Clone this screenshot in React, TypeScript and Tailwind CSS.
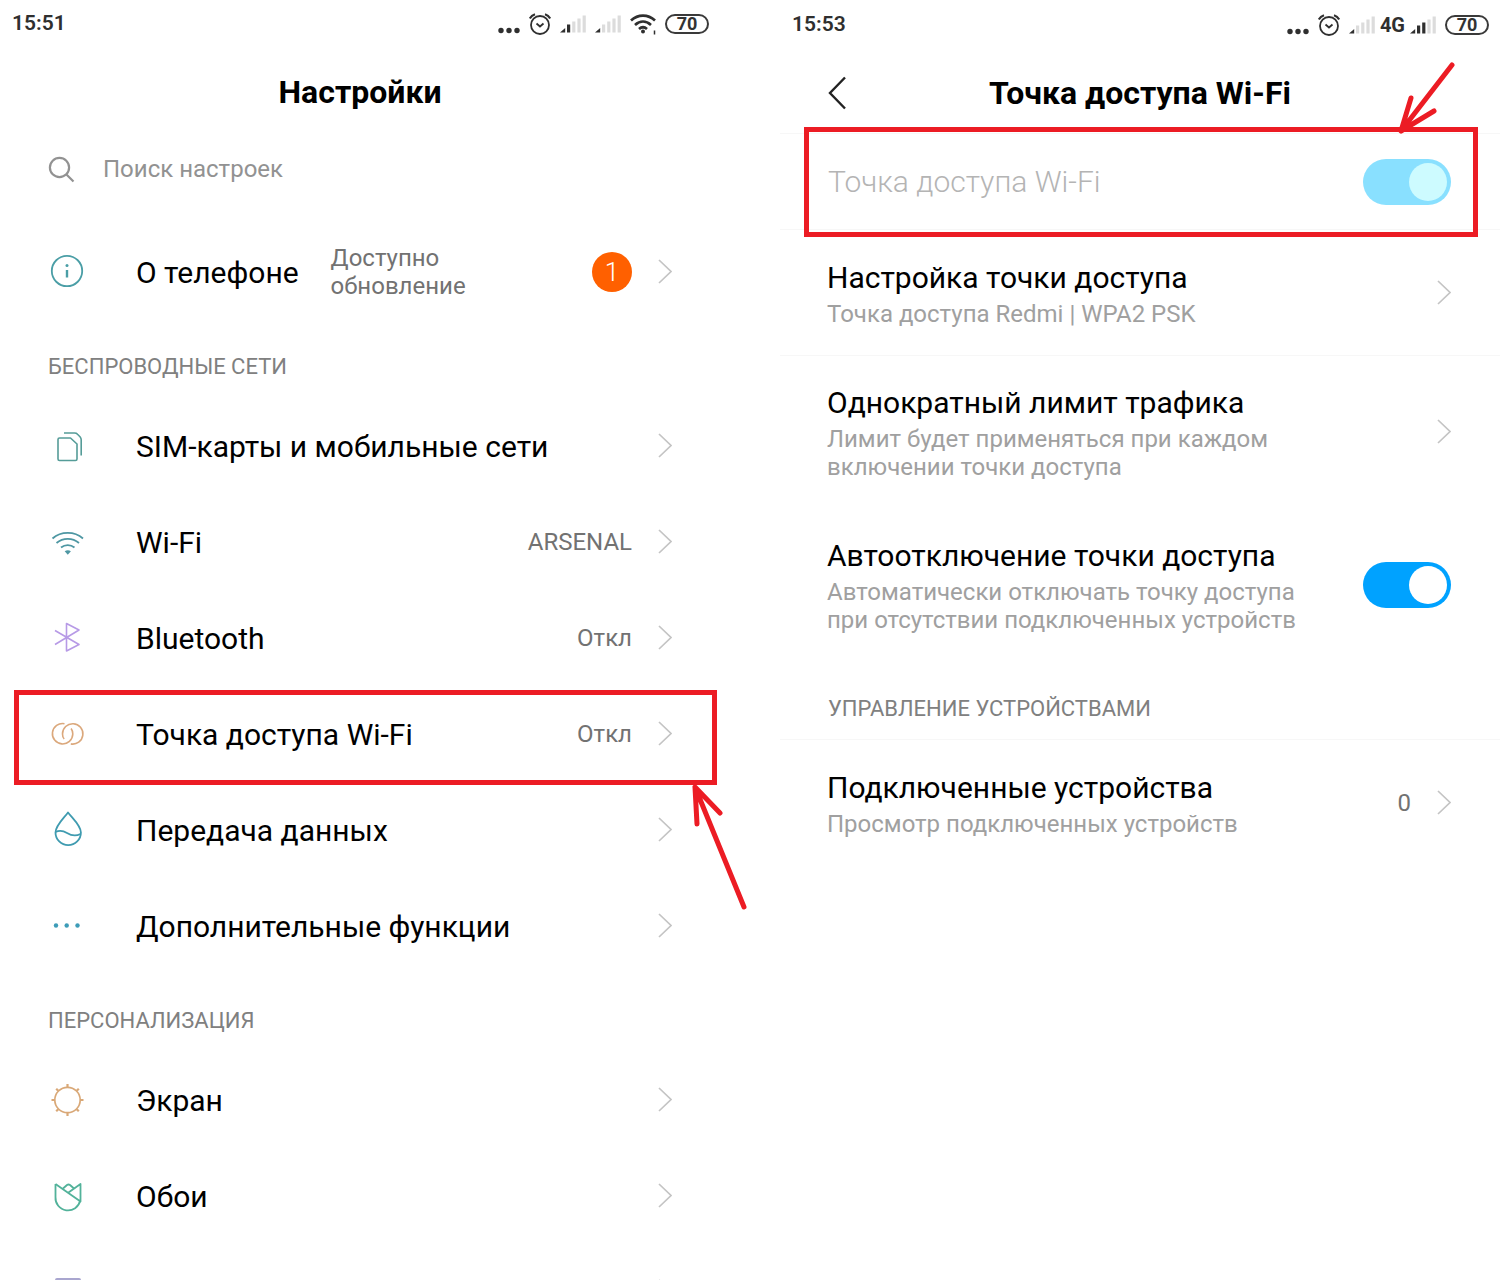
import type { ReactNode } from 'react';

type IconProps = { className?: string };

function InfoIcon() {
  return (
    <svg viewBox="0 0 38 38" className="size-[38px]" fill="none" stroke="#4a9ea6" strokeWidth="1.8">
      <circle cx="19" cy="18" r="15.2" />
      <path d="M19 17v7.5" strokeWidth="2.4" />
      <circle cx="19" cy="12.6" r="1.5" fill="#4a9ea6" stroke="none" />
    </svg>
  );
}

function SimIcon() {
  return (
    <svg viewBox="0 0 38 38" className="size-[38px]" fill="none" stroke="#559c98" strokeWidth="1.6" strokeLinejoin="round">
      <path d="M11.5 11h11l6.500 6V32q0 1.500-1.500 1.500h-16Q10 33.500 10 32V12.500Q10 11 11.500 11z" />
      <path d="M16 6h10.500q2 0 3 1.200l2.500 2.500q1.200 1.300 1.200 3V28.500" />
    </svg>
  );
}

function WifiIcon() {
  return (
    <svg viewBox="-1 0 38 38" className="size-[38px]" fill="none" stroke="#4e97a3" strokeWidth="1.8">
      <path d="M3.500 15.500c8.500-7.500 22-7.500 30.500 0" />
      <path d="M7.500 20c6.500-5.500 16-5.500 22.500 0" />
      <path d="M12 24.500c4-3.300 9.500-3.300 13.500 0" />
      <path d="M15.700 28.300q3.100-2 6.200 0l-3.100 3.400z" fill="#4e97a3" stroke="none" />
    </svg>
  );
}

function BluetoothIcon() {
  return (
    <svg viewBox="-1 0 38 38" className="size-[38px]" fill="none" stroke="#b79ae6" strokeWidth="1.6" strokeLinejoin="round">
      <path d="M6 11.500l24 14L17.500 32V4.500L30 11 6 25.500" />
    </svg>
  );
}

function HotspotIcon() {
  return (
    <svg viewBox="-1 0 38 38" className="size-[38px]" fill="none" stroke="#dba87c" strokeWidth="1.600">
      <path d="M15.500 8.700A10.200 10.200 0 1 0 23.800 19c0-2-.6-4-1.700-5.500" />
      <path d="M21.800 28.900A10.200 10.200 0 1 0 13.500 19c0 2 .6 4 1.700 5" />
    </svg>
  );
}

function DropIcon() {
  return (
    <svg viewBox="-1 0 38 38" className="size-[38px]" fill="none" stroke="#3f9bb0" strokeWidth="1.8" strokeLinejoin="round">
      <path d="M19 1.500C14.500 7.500 6.500 14.500 6.500 21.500a12.700 12.700 0 0 0 25.400 0C31.900 14.500 23.500 7.500 19 1.500z" />
      <path d="M6.500 21c4-2 7.500-1.500 11.500 1s9.500 3 13.500 1" />
    </svg>
  );
}

function DotsIcon() {
  return (
    <svg viewBox="0 0 38 38" className="size-[38px]" fill="#3d9cb8">
      <circle cx="8" cy="18.500" r="2.200" />
      <circle cx="18.700" cy="18.500" r="2.200" />
      <circle cx="29.500" cy="18.500" r="2.200" />
    </svg>
  );
}

function SunIcon() {
  return (
    <svg viewBox="0 0 38 38" className="size-[38px]" fill="none" stroke="#d9a877" strokeWidth="1.7">
      <circle cx="19.500" cy="19" r="12.700" />
      <path
        d="M19.500 6V3M19.500 32v3M6.500 19h-3M32.500 19h3M10.300 9.800L8.200 7.700M28.700 9.800l2.100-2.100M10.300 28.200l-2.100 2.100M28.700 28.200l2.100 2.100"
        strokeWidth="2.200"
      />
    </svg>
  );
}

function TulipIcon() {
  return (
    <svg viewBox="-1 0 38 38" className="size-[38px]" fill="none" stroke="#52b29a" strokeWidth="1.800" strokeLinejoin="round">
      <path d="M6.500 7L31.500 24.500V7L19.500 15.500" />
      <path d="M6.500 7V20a12.500 12.500 0 0 0 24.700 3.500" />
      <path d="M14 11.500l4-3.500q1.500-1 3 0l4 3.500" />
    </svg>
  );
}

function LockScreenIcon() {
  return (
    <svg viewBox="-1 0 38 38" className="size-[38px]" fill="none" stroke="#a9a6cf" strokeWidth="2">
      <rect x="7" y="6" width="24" height="28" rx="1" />
    </svg>
  );
}

function Chevron() {
  return (
    <svg viewBox="0 0 14 26" className="h-[26px] w-[14px] shrink-0" fill="none" stroke="#c4c4c4" strokeWidth="1.700">
      <path d="M1 1l12 11.500L1 24" />
    </svg>
  );
}

function MoreDots() {
  return (
    <svg viewBox="0 0 22 24" className="h-6 w-[22px]" fill="#2f2f2f">
      <circle cx="3" cy="18.500" r="2.700" />
      <circle cx="11" cy="18.500" r="2.700" />
      <circle cx="19" cy="18.500" r="2.700" />
    </svg>
  );
}

function AlarmIcon() {
  return (
    <svg viewBox="0 0 22 24" className="h-6 w-[22px]" fill="none" stroke="#2f2f2f" strokeWidth="1.800">
      <circle cx="11" cy="13" r="9" />
      <path d="M7.500 11.500l3.500 3 3.500-3" />
      <path d="M.800 6.500Q2.500 3.500 6 2.300M21.200 6.500Q19.500 3.500 16 2.300" strokeWidth="2.200" />
    </svg>
  );
}

function SignalIcon({ level }: { level: number }) {
  const bars = [4, 8, 11, 14, 17];
  return (
    <svg viewBox="0 0 26 24" className="h-6 w-[26px]">
      {bars.map((h, i) =>
        i === 0 ? (
          <path key={i} d="M0 20.500l5.200-4.500v4.500z" fill="#2f2f2f" />
        ) : (
          <rect key={i} x={1.8 + i * 5.200} y={20.5 - h} width="3.200" height={h} fill={i < level ? '#2f2f2f' : '#dcdcdc'} />
        ),
      )}
    </svg>
  );
}

function StatusWifi() {
  return (
    <svg viewBox="0 0 26 24" className="h-6 w-[26px]" fill="none" stroke="#2f2f2f" strokeWidth="2.700">
      <path d="M1 8.500c7-6.500 17-6.500 24 0" />
      <path d="M5 13c5-4.500 11-4.500 16 0" />
      <path d="M9 17c2.500-2.200 5.500-2.200 8 0" />
      <circle cx="13" cy="19.500" r="2" fill="#2f2f2f" stroke="none" />
      <path d="M24.500 18.500v4" strokeWidth="1.500" />
    </svg>
  );
}

function Battery() {
  return (
    <span className="flex h-5 w-11 items-center justify-center rounded-full border-2 border-[#3a3a3a] text-[18px] leading-none font-bold text-[#333]">
      70
    </span>
  );
}

function StatusBar({ time, children }: { time: string; children: ReactNode }) {
  return (
    <div className="flex h-12 items-center justify-between pr-[11px] pl-3 text-[#2f2f2f]">
      <span className="text-[21px] font-semibold">{time}</span>
      <div className="flex items-center gap-[9px]">{children}</div>
    </div>
  );
}

function Arrow({ className, d }: IconProps & { d: string }) {
  return (
    <svg className={className} fill="none" stroke="#ec1c24" strokeWidth="5" strokeLinecap="round" strokeLinejoin="round">
      <path d={d} />
    </svg>
  );
}

type SettingsRowProps = {
  icon: ReactNode;
  label?: string;
  note?: string;
  value?: string;
  badge?: number;
  children?: ReactNode;
};

function SettingsRow({ icon, label, note, value, badge, children }: SettingsRowProps) {
  return (
    <li className="relative">
      <a href="#" className="flex h-24 items-center pr-12 pl-12">
        <span className="mr-[50px] shrink-0">{icon}</span>
        <span className="text-[30px] whitespace-nowrap text-black">{label}</span>
        {note && <span className="ml-8 w-40 text-2xl leading-7 text-[#727272]">{note}</span>}
        <span className="ml-auto flex items-center gap-[26px]">
          {value && <span className="text-2xl text-[#727272]">{value}</span>}
          {badge && (
            <span className="flex size-10 items-center justify-center rounded-full bg-[#ff6000] text-[26px] font-light text-white">
              {badge}
            </span>
          )}
          <Chevron />
        </span>
      </a>
      {children}
    </li>
  );
}

function HotspotText({ title, text }: { title: string; text: string }) {
  return (
    <span className="block max-w-[500px]">
      <span className="mb-[2px] block text-[30px] leading-10 text-black">{title}</span>
      <span className="block text-2xl leading-7 text-[#a0a0a0]">{text}</span>
    </span>
  );
}

const toggleClass =
  "relative h-[46px] w-[88px] shrink-0 appearance-none rounded-full bg-[#ccc] checked:bg-[#00a2ff] disabled:bg-[#89e0ff] before:absolute before:top-1 before:left-1 before:size-[38px] before:rounded-full before:bg-white before:content-[''] checked:before:left-[46px] disabled:before:bg-[#cdfbff]";

const wireless = [
  { icon: <SimIcon />, label: 'SIM-карты и мобильные сети' },
  { icon: <WifiIcon />, label: 'Wi-Fi', value: 'ARSENAL' },
  { icon: <BluetoothIcon />, label: 'Bluetooth', value: 'Откл' },
  { icon: <HotspotIcon />, label: 'Точка доступа Wi-Fi', value: 'Откл', marked: true },
  { icon: <DropIcon />, label: 'Передача данных' },
  { icon: <DotsIcon />, label: 'Дополнительные функции' },
];

function SettingsScreen() {
  return (
    <main>
      <StatusBar time="15:51">
        <MoreDots />
        <AlarmIcon />
        <SignalIcon level={2} />
        <SignalIcon level={1} />
        <StatusWifi />
        <Battery />
      </StatusBar>
      <h1 className="flex h-[88px] items-center justify-center text-[32px] font-bold text-black">Настройки</h1>

      <div className="mb-[22px] flex h-[66px] items-center gap-7 px-12">
        <svg viewBox="0 0 27 27" className="size-[27px]" fill="none" stroke="#929292" strokeWidth="2.200">
          <circle cx="11.500" cy="11.500" r="9.600" />
          <path d="M18.500 18.500l7 7" />
        </svg>
        <input
          type="text"
          aria-label="Поиск настроек"
          placeholder="Поиск настроек"
          className="min-w-0 flex-1 text-2xl outline-none placeholder:text-[#929292]"
        />
      </div>

      <ul>
        <SettingsRow icon={<InfoIcon />} label="О телефоне" note="Доступно обновление" badge={1} />
      </ul>

      <h2 className="h-[78px] px-12 pt-8 text-[22px] leading-[30px] text-[#808080]">БЕСПРОВОДНЫЕ СЕТИ</h2>
      <ul>
        {wireless.map(({ marked, ...row }) => (
          <SettingsRow key={row.label} {...row}>
            {marked && (
              <>
                <span className="pointer-events-none absolute top-1 right-[3px] -bottom-[3px] left-[14px] border-[5px] border-[#ec1c24]" />
                <Arrow
                  className="pointer-events-none absolute top-full -right-[30px] z-10 h-32 w-[60px]"
                  d="M54 125L5 5M7 42L5 5l25 26"
                />
              </>
            )}
          </SettingsRow>
        ))}
      </ul>

      <h2 className="h-[78px] px-12 pt-8 text-[22px] leading-[30px] text-[#808080]">ПЕРСОНАЛИЗАЦИЯ</h2>
      <ul>
        <SettingsRow icon={<SunIcon />} label="Экран" />
        <SettingsRow icon={<TulipIcon />} label="Обои" />
        <SettingsRow icon={<LockScreenIcon />} />
      </ul>
    </main>
  );
}

function HotspotScreen() {
  return (
    <section className="pt-px">
      <StatusBar time="15:53">
        <MoreDots />
        <AlarmIcon />
        <SignalIcon level={1} />
        <span className="-mx-1 text-[20px] font-bold">4G</span>
        <SignalIcon level={3} />
        <Battery />
      </StatusBar>
      <header className="grid h-[84px] grid-cols-[48px_1fr_48px] items-center px-[47px] pt-1">
        <button type="button" aria-label="Назад">
          <svg viewBox="0 0 20 34" className="h-[34px] w-5" fill="none" stroke="#222" strokeWidth="2.400">
            <path d="M18 1.500L3 17l15 15.500" />
          </svg>
        </button>
        <h1 className="text-center text-[32px] font-bold whitespace-nowrap text-black">Точка доступа Wi-Fi</h1>
      </header>

      <div className="relative flex h-[97px] items-center justify-between border-y border-[#f7f7f7] pr-[49px] pl-12">
        <label htmlFor="hotspot" className="text-[30px] font-light text-[#b4b4b4]">
          Точка доступа Wi-Fi
        </label>
        <input id="hotspot" type="checkbox" role="switch" defaultChecked disabled className={toggleClass} />
        <span className="pointer-events-none absolute -top-[7px] right-[22px] -bottom-2 left-6 border-[5px] border-[#ec1c24]" />
        <Arrow
          className="pointer-events-none absolute right-[41px] bottom-full z-10 h-[76px] w-[64px]"
          d="M57 7L6 73M16 40L6 73l33-20"
        />
      </div>

      <a href="#" className="flex h-[126px] items-center justify-between border-b border-[#f7f7f7] pr-[49px] pl-[47px]">
        <HotspotText title="Настройка точки доступа" text="Точка доступа Redmi | WPA2 PSK" />
        <Chevron />
      </a>
      <a href="#" className="flex h-[152px] items-center justify-between pr-[49px] pl-[47px]">
        <HotspotText title="Однократный лимит трафика" text="Лимит будет применяться при каждом включении точки доступа" />
        <Chevron />
      </a>
      <div className="flex h-[154px] items-center justify-between pr-[49px] pl-[47px]">
        <label htmlFor="auto-off">
          <HotspotText
            title="Автоотключение точки доступа"
            text="Автоматически отключать точку доступа при отсутствии подключенных устройств"
          />
        </label>
        <input id="auto-off" type="checkbox" role="switch" defaultChecked className={toggleClass} />
      </div>

      <h2 className="h-[78px] border-b border-[#f7f7f7] px-12 pt-8 text-[22px] leading-[30px] text-[#808080]">
        УПРАВЛЕНИЕ УСТРОЙСТВАМИ
      </h2>
      <a href="#" className="flex h-[126px] items-center justify-between pr-[49px] pl-[47px]">
        <HotspotText title="Подключенные устройства" text="Просмотр подключенных устройств" />
        <span className="flex items-center gap-[26px] text-2xl text-[#727272]">
          0
          <Chevron />
        </span>
      </a>
    </section>
  );
}

export default function App() {
  return (
    <div className="grid h-screen grid-cols-2 gap-[60px] overflow-hidden bg-white font-[Roboto,sans-serif]">
      <SettingsScreen />
      <HotspotScreen />
    </div>
  );
}
